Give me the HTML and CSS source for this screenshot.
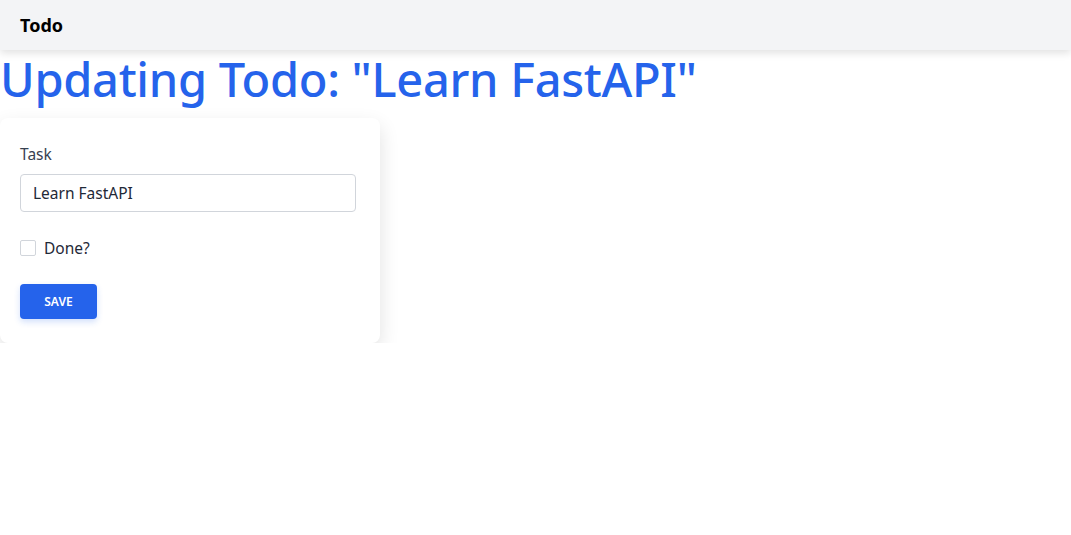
FILE: index.html
```html
<!DOCTYPE html>
<html>
<head>
<meta charset="utf-8">
<link rel="stylesheet" href="styles.css">
</head>
<body>
<nav class="navbar"><span class="brand">Todo</span></nav>
<h1 class="title">Updating Todo: "Learn FastAPI"</h1>
<form class="card">
  <label class="label" for="task">Task</label>
  <input class="input" id="task" type="text" value="Learn FastAPI">
  <label class="check-row"><span class="checkbox"></span><span>Done?</span></label>
  <button class="btn" type="button">SAVE</button>
</form>
</body>
</html>
```
FILE: styles.css
```css
* { box-sizing: border-box; }
body {
  margin: 0;
  font-family: "Noto Sans", "Open Sans", sans-serif;
  color: #1f2937;
  background: #fff;
}
.navbar {
  height: 50px;
  background: #f3f4f6;
  box-shadow: 0 3px 8px rgba(0,0,0,0.12);
  display: flex;
  align-items: center;
  padding: 0 20px;
}
.brand {
  font-weight: 700;
  font-size: 18px;
  color: #000;
}
.title {
  margin: 1px 0 11px;
  font-size: 47px;
  line-height: 56px;
  font-weight: 500;
  color: #2563eb;
  letter-spacing: -0.3px;
}
.card {
  width: 380px;
  padding: 24px 20px 24px;
  background: #fff;
  border-radius: 8px;
  box-shadow: 0 8px 20px rgba(0,0,0,0.12);
  display: flex;
  flex-direction: column;
  align-items: flex-start;
}
.label {
  font-size: 15.5px;
  line-height: 24px;
  color: #374151;
  margin-bottom: 8px;
}
.input {
  width: 336px;
  height: 38px;
  border: 1px solid #d1d5db;
  border-radius: 4px;
  padding: 0 12px;
  font-family: inherit;
  font-size: 15.5px;
  color: #1f2937;
  outline: none;
}
.check-row {
  margin-top: 25px;
  display: flex;
  align-items: center;
  gap: 8px;
  font-size: 15.5px;
  color: #1f2937;
}
.checkbox {
  width: 16px;
  height: 16px;
  border: 1px solid #d1d5db;
  border-radius: 2px;
  background: #fff;
}
.btn {
  margin-top: 25px;
  width: 77px;
  height: 35px;
  background: #2563eb;
  color: #fff;
  border: 0;
  border-radius: 4px;
  font-family: inherit;
  font-weight: 600;
  font-size: 12px;
  box-shadow: 0 3px 6px rgba(37,99,235,0.2);
}
```
